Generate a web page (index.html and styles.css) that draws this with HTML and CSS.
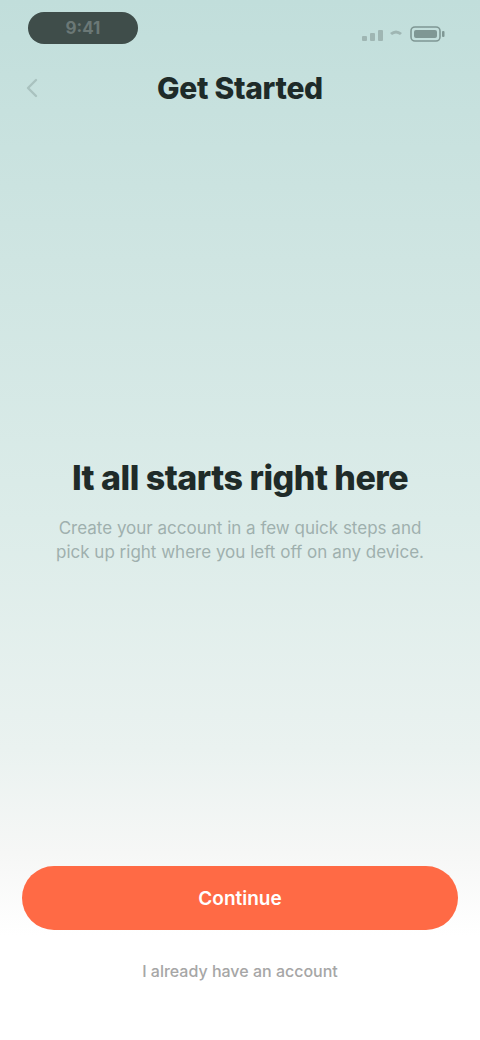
FILE: index.html
```html
<!DOCTYPE html>
<html lang="en">
<head>
<meta charset="utf-8">
<meta name="viewport" content="width=480, initial-scale=1">
<title>Get Started</title>
<link rel="stylesheet" href="styles.css">
</head>
<body>
<div class="screen">
  <div class="status-bar">
    <div class="time-pill">9:41</div>
    <div class="status-icons">
      <svg class="signal" width="40" height="14" viewBox="0 0 40 14">
        <rect x="0" y="9" width="5" height="5" rx="1"/>
        <rect x="8" y="6" width="5" height="8" rx="1"/>
        <rect x="16" y="3" width="5" height="11" rx="1"/>
        <path d="M28 6 q6 -5 12 0 l-2 2 q-4 -3 -8 0z"/>
      </svg>
      <svg class="battery" width="36" height="16" viewBox="0 0 36 16">
        <rect x="1" y="1" width="29" height="14" rx="4" fill="none" stroke-width="1.6"/>
        <rect x="4" y="4" width="23" height="8" rx="2" class="fill"/>
        <rect x="32" y="5" width="2.5" height="6" rx="1" class="fill"/>
      </svg>
    </div>
  </div>
  <header class="nav">
    <button class="back" aria-label="Back">
      <svg width="12" height="20" viewBox="0 0 12 20"><path d="M10 2 L2 10 L10 18" fill="none" stroke-width="2.4" stroke-linecap="round" stroke-linejoin="round"/></svg>
    </button>
    <h1 class="nav-title">Get Started</h1>
  </header>
  <main class="content">
    <h2 class="headline">It all starts right here</h2>
    <p class="lead">Create your account in a few quick steps and<br>pick up right where you left off on any device.</p>
  </main>
  <footer class="actions">
    <button class="primary">Continue</button>
    <a class="secondary" href="#">I already have an account</a>
  </footer>
</div>
</body>
</html>
```
FILE: styles.css
```css
* { box-sizing: border-box; }
html, body { margin: 0; padding: 0; }
body {
  font-family: "Inter", "Liberation Sans", sans-serif;
  background: #ffffff;
}
.screen {
  width: 480px;
  height: 1040px;
  display: flex;
  flex-direction: column;
  background: linear-gradient(180deg, #c1dedb 0%, #cfe5e2 25%, #dcece9 50%, #eaf2f0 72%, #f6f7f6 82%, #ffffff 90%);
}
.status-bar {
  height: 58px;
  padding: 12px 34px 0 28px;
  display: flex;
  justify-content: space-between;
  align-items: flex-start;
}
.time-pill {
  width: 110px;
  height: 32px;
  border-radius: 16px;
  background: #3f4d4a;
  color: #6b7876;
  font-weight: 700;
  font-size: 17px;
  display: flex;
  align-items: center;
  justify-content: center;
}
.status-icons {
  display: flex;
  align-items: center;
  gap: 8px;
  margin-top: 14px;
}
.signal { fill: #9fb6b3; }
.battery { stroke: #7f9794; }
.battery .fill { fill: #7f9794; stroke: none; }
.nav {
  height: 60px;
  display: flex;
  align-items: center;
  justify-content: center;
  position: relative;
}
.back {
  position: absolute;
  left: 26px;
  top: 20px;
  background: none;
  border: 0;
  padding: 0;
}
.back svg { stroke: #a9c2bf; display: block; }
.nav-title {
  margin: 0;
  font-size: 30px;
  font-weight: 800;
  color: #1e2b29;
  letter-spacing: -0.3px;
}
.content {
  flex: 1;
  display: flex;
  flex-direction: column;
  align-items: center;
  justify-content: center;
  padding: 36px 40px 0;
  text-align: center;
}
.headline {
  margin: 0 0 18px;
  font-size: 34px;
  font-weight: 800;
  color: #1f2b29;
  letter-spacing: -0.5px;
}
.lead {
  margin: 0;
  font-size: 17px;
  line-height: 24px;
  color: #9fb0ae;
}
.actions {
  display: flex;
  flex-direction: column;
  align-items: center;
  padding: 0 22px 59px;
}
.primary {
  width: 436px;
  height: 64px;
  border: 0;
  border-radius: 32px;
  background: #ff6a45;
  color: #fff;
  font-family: inherit;
  font-size: 19px;
  font-weight: 600;
  margin-bottom: 31px;
}
.secondary {
  font-size: 16px;
  color: #a6a6a6;
  text-decoration: none;
  font-weight: 500;
}
```
